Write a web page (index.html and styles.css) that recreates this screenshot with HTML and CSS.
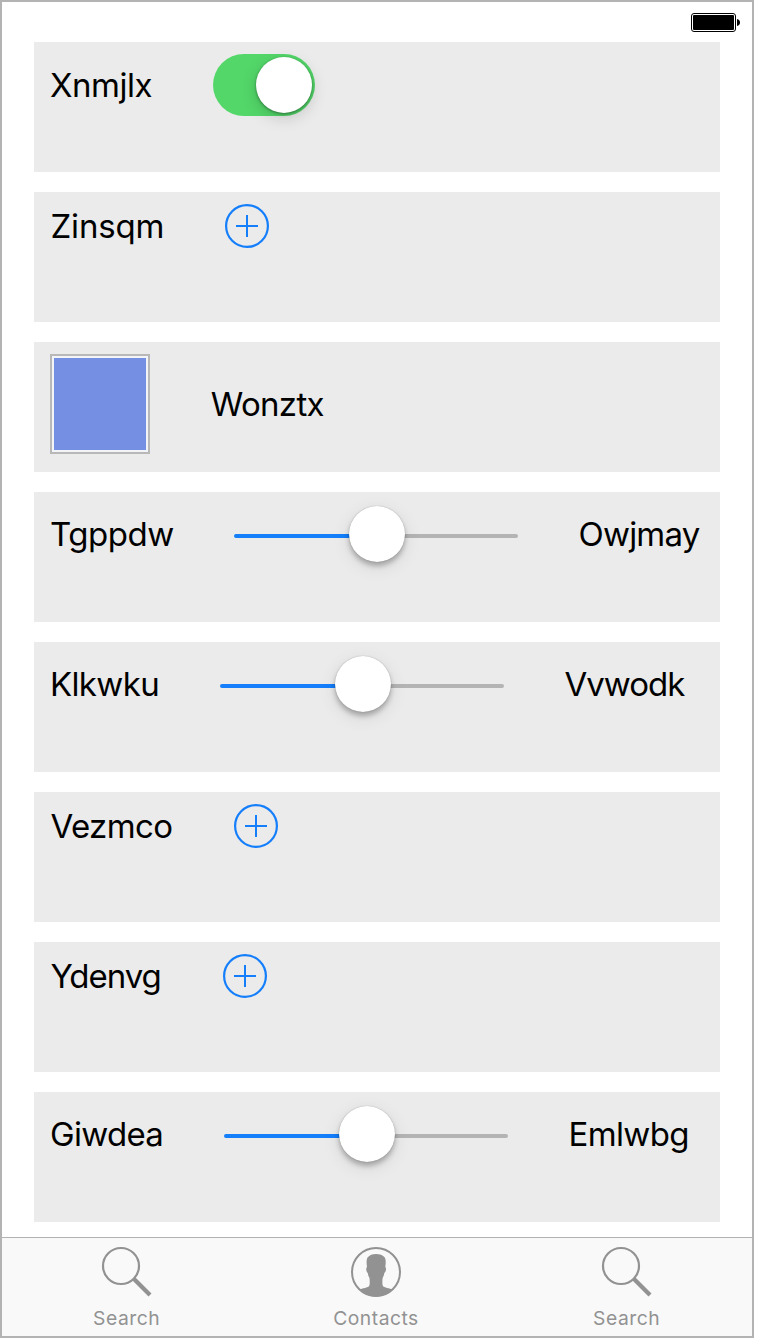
FILE: index.html
```html
<!DOCTYPE html>
<html lang="en">
<head>
<meta charset="utf-8">
<title>Controls</title>
<link rel="stylesheet" href="styles.css">
</head>
<body>
<svg class="defs" width="0" height="0">
  <symbol id="add" viewBox="0 0 44 44"><circle cx="22" cy="22" r="20.900" fill="none" stroke="currentColor" stroke-width="2.200"/><path d="M22 11v22M11 22h22" stroke="currentColor" stroke-width="2"/></symbol>
  <symbol id="search" viewBox="0 0 52 52"><circle cx="20" cy="20" r="18" fill="none" stroke="currentColor" stroke-width="2.200"/><path d="M32.500 32.500L49 49" stroke="currentColor" stroke-width="4.200"/></symbol>
</svg>
<div class="phone">
  <header class="status">
    <svg width="50" height="19" viewBox="0 0 50 19"><rect x=".5" y=".5" width="44" height="18" rx="2.500" fill="#fff" stroke="#000"/><rect x="2" y="2" width="41" height="15" rx="1" fill="#000"/><path d="M46 6c4 .6 4 6.400 0 7z" fill="#000"/></svg>
  </header>
  <main class="list">
    <section class="card"><div class="row switch-row"><span class="label xnmjlx">Xnmjlx</span><span class="switch"><span class="knob"></span></span></div></section>
    <section class="card"><div class="row add-row"><span class="label zinsqm">Zinsqm</span><svg class="add"><use href="#add"/></svg></div></section>
    <section class="card"><div class="row"><span class="swatch"></span><span class="label wonztx">Wonztx</span></div></section>
    <section class="card"><div class="row slider-row"><span class="label tgppdw">Tgppdw</span><span class="slider"><span class="knob"></span></span><span class="label owjmay">Owjmay</span></div></section>
    <section class="card"><div class="row slider-row"><span class="label klkwku">Klkwku</span><span class="slider"><span class="knob"></span></span><span class="label vvwodk">Vvwodk</span></div></section>
    <section class="card"><div class="row add-row"><span class="label vezmco">Vezmco</span><svg class="add"><use href="#add"/></svg></div></section>
    <section class="card"><div class="row add-row"><span class="label ydenvg">Ydenvg</span><svg class="add"><use href="#add"/></svg></div></section>
    <section class="card"><div class="row slider-row"><span class="label giwdea">Giwdea</span><span class="slider"><span class="knob"></span></span><span class="label emlwbg">Emlwbg</span></div></section>
  </main>
  <nav class="tabs">
    <div class="tab"><svg class="icon"><use href="#search"/></svg><span>Search</span></div>
    <div class="tab contacts"><svg class="icon" viewBox="0 0 52 52"><circle cx="26" cy="26" r="24" fill="none" stroke="currentColor" stroke-width="2"/><path d="M10 43.500c3-1.500 7-1.700 8.800-3 1.200-1 1-5 .7-8.500-1-1.500-1.500-3.500-1.700-5-1.300-.8-1.700-3-1.500-5l.7-1c-.5-4-.8-7 .5-9.500C19.500 9 22.500 8 26 8s7 1 8.800 3.500c1.300 2.500 1 5.500.5 9.500l.7 1c.2 2-.4 4.200-1.700 5-.2 1.500-.7 3.500-1.700 5-.3 3.500-.5 7.500.7 8.500 1.800 1.300 5.700 1.500 8.700 3C38 48 33 50.500 26 50.500S14 48 10 43.500z" fill="currentColor"/></svg><span>Contacts</span></div>
    <div class="tab"><svg class="icon"><use href="#search"/></svg><span>Search</span></div>
  </nav>
</div>
</body>
</html>
```
FILE: styles.css
```css
* { box-sizing: border-box; }
body { margin: 0; background: #fff; font-family: Inter, "Liberation Sans", sans-serif; color: #000; }
.defs { position: absolute; }
.phone { width: 754px; height: 1338px; border: 2px solid #b3b3b3; display: flex; flex-direction: column; background: #fff; }
.status { height: 40px; padding: 11px 11px 0 0; display: flex; justify-content: flex-end; align-items: flex-start; }
.list { flex: 1; display: flex; flex-direction: column; gap: 20px; padding: 0 32px; }
.card { height: 130px; background: #ebebeb; padding: 12px 16px; }
.row { display: flex; align-items: center; gap: 60px; }
.switch-row { height: 62px; }
.add-row { height: 44px; }
.slider-row { height: 60px; }
.label { font-size: 33px; line-height: 40px; white-space: nowrap; flex: none; }
.xnmjlx { width: 103px; letter-spacing: -.5px; }
.zinsqm { width: 115px; letter-spacing: -.15px; padding-left: .5px; }
.wonztx { width: 115px; letter-spacing: -.65px; padding-left: .7px; }
.tgppdw { width: 124px; letter-spacing: -.45px; }
.owjmay { width: 122px; letter-spacing: -.8px; padding-left: .5px; }
.klkwku { width: 110px; letter-spacing: -.65px; }
.vvwodk { width: 120px; letter-spacing: -1px; padding-left: .5px; }
.vezmco { width: 124px; letter-spacing: -.6px; padding-left: .4px; }
.ydenvg { width: 113px; letter-spacing: -1px; padding-left: .4px; }
.giwdea { width: 114px; letter-spacing: -.7px; }
.emlwbg { width: 121px; letter-spacing: -.65px; padding-left: .5px; }
.add { width: 44px; height: 44px; color: #147efb; flex: none; }
.swatch { width: 100px; height: 100px; border: 2px solid #b8b8b8; background: #758fe2; box-shadow: inset 0 0 0 2px #f3f4f8; flex: none; }
.knob { display: block; width: 56px; height: 56px; border-radius: 50%; background: #fff; flex: none; }
.switch { width: 102px; height: 62px; padding: 3px; border-radius: 31px; background: #53d769; display: flex; justify-content: flex-end; flex: none; }
.switch .knob { box-shadow: 0 1px 3px rgba(0,0,0,.4), 0 5px 16px rgba(0,0,0,.17); }
.slider { width: 284px; height: 60px; display: grid; grid-template: 60px / 1fr; align-items: start; justify-items: center; flex: none; }
.slider::before { content: ""; grid-area: 1 / 1; width: 100%; height: 4px; margin-top: 30px; border-radius: 2px; background: linear-gradient(90deg, #147efb 50%, #b4b4b4 50%); }
.slider .knob { grid-area: 1 / 1; margin: 2px 0 0 2px; box-shadow: 0 0 1px rgba(0,0,0,.35), 0 4px 5px rgba(0,0,0,.25), 0 5px 18px rgba(0,0,0,.1); }
.tabs { height: 99px; background: #f9f9f9; border-top: 1px solid #b2b2b2; display: grid; grid-template-columns: repeat(3, 250px); color: #929292; }
.tab { display: flex; flex-direction: column; align-items: center; padding-top: 8px; font-size: 19.3px; line-height: 24px; letter-spacing: .5px; gap: 8px; }
.tab span { padding-right: .8px; }
.contacts { padding-right: 2px; }
.contacts span { padding-right: 0; }
.icon { width: 52px; height: 52px; flex: none; }
```
